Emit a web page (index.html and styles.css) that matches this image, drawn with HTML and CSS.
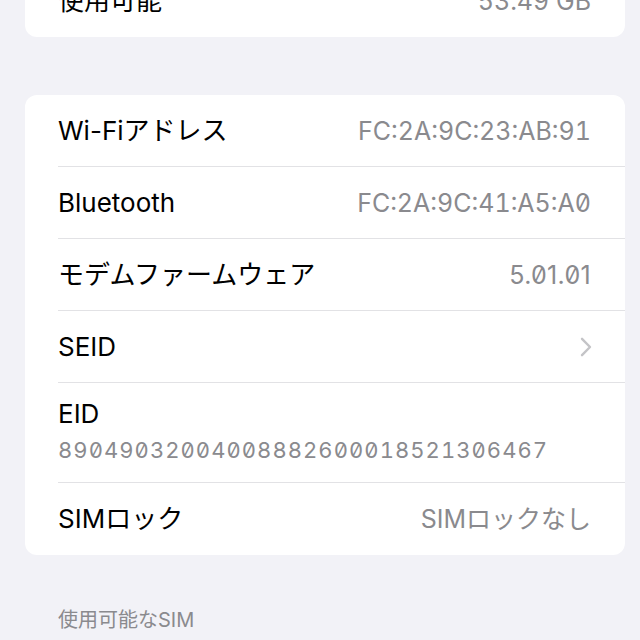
FILE: index.html
```html
<!DOCTYPE html>
<html lang="ja">
<head>
<meta charset="utf-8">
<title>情報</title>
<link rel="stylesheet" href="styles.css">
</head>
<body>
<main class="screen">
  <section class="card card-top">
    <div class="row last">
      <span class="label">使用可能</span>
      <span class="value">53.49 GB</span>
    </div>
  </section>

  <section class="card card-info">
    <div class="row">
      <span class="label">Wi-Fiアドレス</span>
      <span class="value">FC:2A:9C:23:AB:91</span>
    </div>
    <div class="row">
      <span class="label">Bluetooth</span>
      <span class="value">FC:2A:9C:41:A5:A0</span>
    </div>
    <div class="row">
      <span class="label">モデムファームウェア</span>
      <span class="value version">5.01.01</span>
    </div>
    <div class="row">
      <span class="label">SEID</span>
      <svg class="chevron" width="12" height="20" viewBox="0 0 12 20" aria-hidden="true">
        <path d="M2 1.8 L10 10 L2 18.2" fill="none" stroke="#C4C4C7" stroke-width="2.4" stroke-linecap="round" stroke-linejoin="round"/>
      </svg>
    </div>
    <div class="row row-stack">
      <span class="label">EID</span>
      <span class="value eid">89049032004008882600018521306467</span>
    </div>
    <div class="row last">
      <span class="label">SIMロック</span>
      <span class="value">SIMロックなし</span>
    </div>
  </section>

  <p class="section-footer">使用可能なSIM</p>
</main>
</body>
</html>
```

FILE: styles.css
```css
html, body {
  margin: 0;
  padding: 0;
}

body {
  background: #F2F2F7;
  width: 640px;
  height: 640px;
  overflow: hidden;
  font-family: "Inter", "Noto Sans CJK JP", sans-serif;
  color: #000;
}

.screen {
  width: 600px;
  padding-left: 25px;
  margin-top: -35px;
  display: flex;
  flex-direction: column;
}

.card {
  background: #FFFFFF;
  border-radius: 12px;
  overflow: hidden;
}

.card-info {
  margin-top: 58px;
}

.row {
  height: 71px;
  margin-left: 33px;
  padding-right: 34px;
  display: flex;
  align-items: center;
  justify-content: space-between;
  border-bottom: 1px solid #E2E2E5;
}

.row.last {
  height: 72px;
  border-bottom: none;
}

.label {
  font-size: 26px;
  line-height: 32px;
  white-space: nowrap;
}

.value {
  font-size: 25px;
  line-height: 32px;
  color: #8A8A8E;
  white-space: nowrap;
  font-feature-settings: "zero" 1, "tnum" 1;
}

.value.version {
  font-feature-settings: "zero" 1;
  letter-spacing: 0.3px;
}

.row-stack {
  height: 100px;
  flex-direction: column;
  align-items: flex-start;
  justify-content: flex-start;
  box-sizing: border-box;
  padding-top: 15px;
  gap: 6px;
}

.value.eid {
  font-size: 22px;
  line-height: 28px;
  letter-spacing: 1.05px;
}

.chevron {
  display: block;
  margin-right: -1px;
}

.section-footer {
  margin: 53px 0 0 33px;
  font-size: 20px;
  line-height: 24px;
  color: #8A8A8E;
}
```
